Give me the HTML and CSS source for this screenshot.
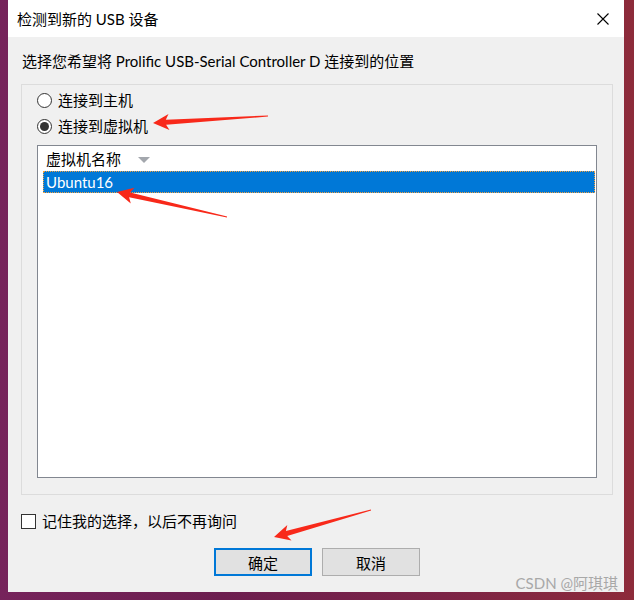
FILE: index.html
```html
<!DOCTYPE html>
<html lang="zh-CN">
<head>
<meta charset="utf-8">
<title>检测到新的 USB 设备</title>
<link rel="stylesheet" href="styles.css">
</head>
<body>
<div class="window">
  <div class="titlebar">
    <span class="title">检测到新的 USB 设备</span>
    <svg class="close" width="12" height="12" viewBox="0 0 12 12"><path d="M0.5 0.5 L11.5 11.5 M11.5 0.5 L0.5 11.5" stroke="#000" stroke-width="1.1" fill="none"/></svg>
  </div>
  <div class="content">
    <p class="prompt">选择您希望将 Prolific USB-Serial Controller D 连接到的位置</p>
    <div class="group">
      <div class="radio-row"><span class="radio"></span><span>连接到主机</span></div>
      <div class="radio-row"><span class="radio checked"></span><span>连接到虚拟机</span></div>
      <div class="listbox">
        <div class="list-header"><span>虚拟机名称</span><span class="sort-arrow"></span></div>
        <div class="list-item selected">Ubuntu16</div>
      </div>
    </div>
    <div class="check-row"><span class="checkbox"></span><span>记住我的选择，以后不再询问</span></div>
    <div class="buttons">
      <button class="btn primary">确定</button>
      <button class="btn">取消</button>
    </div>
  </div>
  <div class="watermark">CSDN @阿琪琪</div>
</div>
<svg class="annotations" width="634" height="600" viewBox="0 0 634 600">
  <polygon points="153,123 169.5,130 166.1,124.7 268,116.6 268,115.4 165.8,119.7 168.5,114"/>
  <polygon points="117,192 130.8,203.4 129.1,197.3 226.9,217.5 227.1,216.5 130.2,192.5 134.4,187.8"/>
  <polygon points="274,537 291.5,540.4 287.2,535.9 371.1,510.5 370.9,509.5 285.9,531.1 287.3,525"/>
</svg>
</body>
</html>
```

FILE: styles.css
```css
* { box-sizing: border-box; }

html, body {
  margin: 0;
  width: 634px;
  height: 600px;
}

body {
  position: relative;
  overflow: hidden;
  padding: 0 10px 8px 8px;
  background: linear-gradient(90deg, #76235b 0%, #6c1e4f 35%, #7c2446 70%, #8d2b3a 100%);
  font-family: Lato, "Noto Sans CJK SC", "Microsoft YaHei", sans-serif;
  font-size: 15px;
  color: #000;
}

.window {
  position: relative;
  width: 616px;
  height: 592px;
  background: #f0f0f0;
  display: flex;
  flex-direction: column;
}

.titlebar {
  height: 37px;
  background: #fff;
  display: flex;
  align-items: center;
  justify-content: space-between;
  padding: 0 15px 0 9px;
}

.title {
  font-size: 15px;
  line-height: 20px;
}

.close { display: block; }

.content {
  padding: 0 11px 0 13px;
  display: flex;
  flex-direction: column;
}

.prompt {
  margin: 14px 0 0 1px;
  font-size: 15px;
  line-height: 20px;
}

.group {
  margin-top: 13px;
  height: 411px;
  border: 1px solid #dcdcdc;
  padding: 2px 15px 16px 15px;
  display: flex;
  flex-direction: column;
}

.radio-row {
  height: 26px;
  display: flex;
  align-items: center;
  gap: 6px;
  line-height: 20px;
}

.radio {
  position: relative;
  width: 15px;
  height: 15px;
  border: 1px solid #333;
  border-radius: 50%;
  background: #fff;
  flex: none;
}

.radio.checked::after {
  content: "";
  position: absolute;
  left: 2px;
  top: 2px;
  width: 9px;
  height: 9px;
  border-radius: 50%;
  background: #333;
}

.listbox {
  margin-top: 6px;
  flex: 1;
  border: 1px solid #828790;
  background: #fff;
}

.list-header {
  height: 25px;
  padding-left: 8px;
  display: flex;
  align-items: center;
  line-height: 20px;
}

.sort-arrow {
  width: 0;
  height: 0;
  margin-left: 17px;
  margin-top: 2px;
  border-left: 6px solid transparent;
  border-right: 6px solid transparent;
  border-top: 6px solid #a3a7ad;
}

.list-item {
  height: 22px;
  margin: 0 1px 0 5px;
  padding-left: 2px;
  line-height: 20px;
}

.list-item.selected {
  background: #0078d7;
  color: #fff;
  border: 1px dotted #f0a040;
}

.check-row {
  margin-top: 16px;
  height: 20px;
  display: flex;
  align-items: center;
  gap: 6px;
  line-height: 20px;
}

.checkbox {
  width: 15px;
  height: 15px;
  border: 1px solid #333;
  background: #fff;
  flex: none;
}

.buttons {
  margin-top: 17px;
  display: flex;
  justify-content: center;
  gap: 10px;
}

.btn {
  width: 98px;
  height: 28px;
  padding: 0;
  background: #e1e1e1;
  border: 1px solid #adadad;
  font-family: inherit;
  font-size: 15px;
  color: #000;
}

.btn.primary {
  border: 2px solid #0078d7;
}

.watermark {
  position: absolute;
  right: 6px;
  bottom: 0;
  font-size: 15px;
  line-height: 18px;
  color: #a8a8a8;
}

.annotations {
  position: absolute;
  left: 0;
  top: 0;
  pointer-events: none;
}

.annotations polygon {
  fill: #f8291a;
}
```
